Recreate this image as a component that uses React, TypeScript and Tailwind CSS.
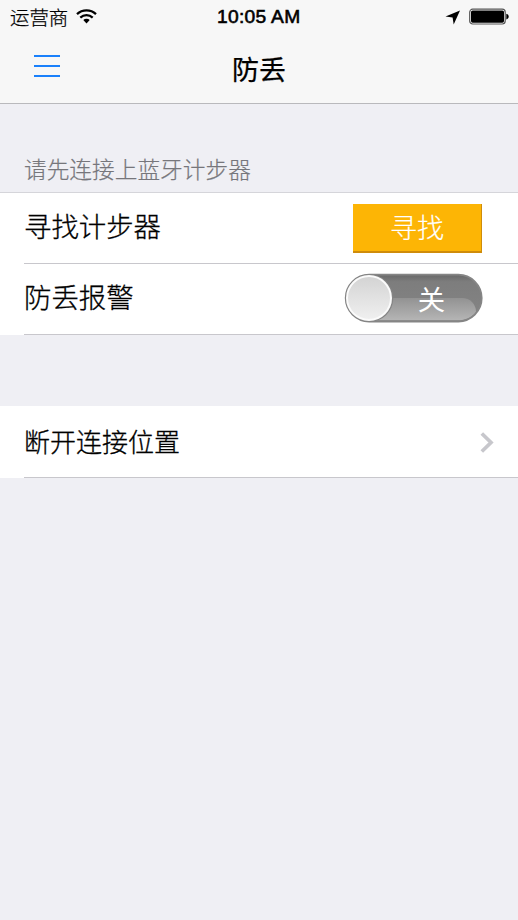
import React from "react";

function StatusBar() {
  return (
    <div className="flex h-[34px] items-center text-black">
      <div className="flex w-[217px] items-center pl-[10px]">
        <span className="w-[66px] whitespace-nowrap text-[19.4px] leading-[32px] font-light [-webkit-text-stroke:0.25px]">运营商</span>
        <svg className="mb-[2px] h-[15px] w-[21px]" viewBox="0 0 21 15" aria-hidden="true">
          <g fill="none" stroke="black" strokeWidth="2.3">
            <path d="M1 5.2 C6.4 0.2 14.6 0.2 20 5.2" />
            <path d="M4.3 8.6 C7.9 5.3 13.1 5.3 16.7 8.6" />
          </g>
          <path d="M7.3 11 C9 9.4 12 9.4 13.7 11 L10.5 14.4 Z" />
        </svg>
      </div>
      <span className="w-[84px] whitespace-nowrap font-['Liberation_Sans',sans-serif] text-[19.2px] font-normal leading-[34px] tracking-[0.3px] [-webkit-text-stroke:0.6px]">10:05 AM</span>
      <svg className="ml-[144px] h-[15px] w-[16px]" viewBox="0 0 16 15" aria-hidden="true">
        <path d="M15 0.5 L8.7 14.5 L7.6 7.6 L0.5 6.6 Z" />
      </svg>
      <svg className="ml-[8px] mb-[1px] h-[17px] w-[41px]" viewBox="0 0 41 17" aria-hidden="true">
        <rect x="0.7" y="1.2" width="35.5" height="14.8" rx="3" fill="white" stroke="#555555" strokeWidth="1.2" />
        <rect x="2" y="2.5" width="33" height="12.2" rx="1.6" />
        <path d="M37.3 5.8 C40.5 6.5 40.5 10.7 37.3 11.4 Z" />
      </svg>
    </div>
  );
}

function NavBar() {
  return (
    <div className="grid h-[69px] grid-cols-[1fr_auto_1fr]">
      <button className="flex h-[22px] w-[26px] flex-col justify-between ml-[34px] mt-[21px]" aria-label="Menu">
        <span className="h-[2px] w-full bg-[#1a80fb]" />
        <span className="h-[2px] w-full bg-[#1a80fb]" />
        <span className="h-[2px] w-full bg-[#1a80fb]" />
      </button>
      <h1 className="text-[27px] font-normal leading-[69px] [-webkit-text-stroke:0.25px]">防丢</h1>
    </div>
  );
}

function Toggle() {
  return (
    <svg className="h-[50px] w-[140px]" viewBox="0 0 140 50" role="switch" aria-checked="false">
      <defs>
        <linearGradient id="track" x1="0" y1="0" x2="0" y2="1">
          <stop offset="0" stopColor="#686868" />
          <stop offset="0.15" stopColor="#7d7d7d" />
          <stop offset="1" stopColor="#858585" />
        </linearGradient>
        <linearGradient id="gloss" x1="0" y1="0" x2="0" y2="1">
          <stop offset="0" stopColor="#929292" />
          <stop offset="1" stopColor="#b5b5b5" />
        </linearGradient>
        <linearGradient id="knob" x1="0" y1="0" x2="0" y2="1">
          <stop offset="0" stopColor="#d3d3d3" />
          <stop offset="1" stopColor="#f0f0f0" />
        </linearGradient>
      </defs>
      <rect x="1.7" y="1.7" width="136" height="46.8" rx="23.4" fill="url(#track)" />
      <path d="M26 25 H118 C126 25 132 31 132 39 C128 44.5 121 47.3 114 47.3 H26 Z" fill="url(#gloss)" />
      <rect x="1.7" y="1.7" width="136" height="46.8" rx="23.4" fill="none" stroke="#858585" strokeWidth="1.8" />
      <circle cx="25.5" cy="25.1" r="23.8" fill="#858585" />
      <circle cx="25" cy="25" r="22" fill="url(#knob)" stroke="#fbfbfb" strokeWidth="2" />
      <text x="73.8" y="37.4" fontSize="27.4" fontWeight="400" fill="white">关</text>
    </svg>
  );
}

function Row({ label, size, children, last }: { label: string; size: string; children: React.ReactNode; last?: boolean }) {
  return (
    <div className="bg-white pl-[24px]">
      <div className={`flex justify-between border-b border-[#c8c7cc] text-black ${last ? "h-[72px]" : "h-[71px]"}`}>
        <span className={`${size} font-light [-webkit-text-stroke:0.3px]`}>{label}</span>
        {children}
      </div>
    </div>
  );
}

export default function App() {
  return (
    <div className="h-[920px] w-[518px] overflow-hidden bg-[#efeff4] font-['Noto_Sans_CJK_SC',sans-serif]">
      <header className="h-[104px] border-b border-[#b9b9bc] bg-[#f7f7f7]">
        <StatusBar />
        <NavBar />
      </header>
      <main>
        <p className="h-[89px] border-b border-[#d5d5da] pl-[24px] pt-[48px] text-[22.7px] font-light leading-[34px] text-[#76767b] [-webkit-text-stroke:0.2px]">请先连接上蓝牙计步器</p>
        <Row label="寻找计步器" size="text-[27.4px] leading-[64px]">
          <button className="mr-[36px] mt-[11px] h-[49px] w-[129px] border-b-2 border-r border-[#cf8c0b] bg-[#fdb505] pb-[2px] text-[27px] font-light leading-[44px] text-white [-webkit-text-stroke:0.2px]">寻找</button>
        </Row>
        <Row label="防丢报警" size="text-[27.4px] leading-[64px]">
          <div className="mr-[34px] mt-[9px]"><Toggle /></div>
        </Row>
        <div className="h-[71px]" />
        <Row label="断开连接位置" size="text-[26px] leading-[69px]" last>
          <svg className="mr-[24px] mt-[26px] h-[21px] w-[14px]" viewBox="0 0 14 21" aria-hidden="true">
            <path d="M1.8 1.5 L11 10.5 L1.8 19.5" fill="none" stroke="#c7c7cc" strokeWidth="3.7" />
          </svg>
        </Row>
      </main>
    </div>
  );
}
